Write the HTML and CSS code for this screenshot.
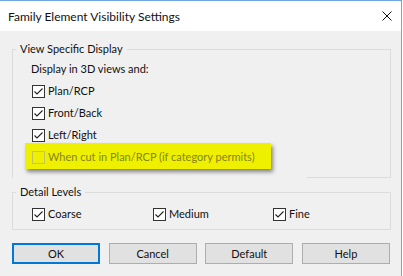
FILE: index.html
```html
<!DOCTYPE html>
<html lang="en">
<head>
  <meta charset="UTF-8" />
  <title>Family Element Visibility Settings</title>
  <link rel="stylesheet" href="styles.css">
</head>
<body>
  <div class="window">
    <div class="titlebar">
      <span class="title">Family Element Visibility Settings</span>
      <svg class="close" width="10" height="10" viewBox="0 0 10 10"><path d="M0.5 0.5 L9.5 9.5 M9.5 0.5 L0.5 9.5" stroke="#111" stroke-width="1" fill="none"/></svg>
    </div>

    <div class="content">
      <fieldset class="group group-view">
        <legend>View Specific Display</legend>
        <div class="row note">Display in 3D views and:</div>
        <label class="row check">
          <svg class="box" viewBox="0 0 13 13"><rect x="0.5" y="0.5" width="12" height="12" fill="#fff" stroke="#333"/><path d="M2.5 6.5 L5 9 L10.5 3.5" fill="none" stroke="#222" stroke-width="1.1"/></svg>
          Plan/RCP
        </label>
        <label class="row check">
          <svg class="box" viewBox="0 0 13 13"><rect x="0.5" y="0.5" width="12" height="12" fill="#fff" stroke="#333"/><path d="M2.5 6.5 L5 9 L10.5 3.5" fill="none" stroke="#222" stroke-width="1.1"/></svg>
          Front/Back
        </label>
        <label class="row check">
          <svg class="box" viewBox="0 0 13 13"><rect x="0.5" y="0.5" width="12" height="12" fill="#fff" stroke="#333"/><path d="M2.5 6.5 L5 9 L10.5 3.5" fill="none" stroke="#222" stroke-width="1.1"/></svg>
          Left/Right
        </label>
        <label class="row check highlight">
          <svg class="box" viewBox="0 0 13 13"><rect x="0.5" y="0.5" width="12" height="12" fill="none" stroke="#c4c45a"/></svg>
          When cut in Plan/RCP (if category permits)
        </label>
        <!-- the pasted highlight hides part of the group's bottom edge -->
        <div class="edge-cover"></div>
      </fieldset>

      <fieldset class="group group-detail">
        <legend>Detail Levels</legend>
        <div class="levels">
          <label class="row check">
            <svg class="box" viewBox="0 0 13 13"><rect x="0.5" y="0.5" width="12" height="12" fill="#fff" stroke="#333"/><path d="M2.5 6.5 L5 9 L10.5 3.5" fill="none" stroke="#222" stroke-width="1.1"/></svg>
            Coarse
          </label>
          <label class="row check">
            <svg class="box" viewBox="0 0 13 13"><rect x="0.5" y="0.5" width="12" height="12" fill="#fff" stroke="#333"/><path d="M2.5 6.5 L5 9 L10.5 3.5" fill="none" stroke="#222" stroke-width="1.1"/></svg>
            Medium
          </label>
          <label class="row check">
            <svg class="box" viewBox="0 0 13 13"><rect x="0.5" y="0.5" width="12" height="12" fill="#fff" stroke="#333"/><path d="M2.5 6.5 L5 9 L10.5 3.5" fill="none" stroke="#222" stroke-width="1.1"/></svg>
            Fine
          </label>
        </div>
      </fieldset>

      <div class="buttons">
        <button class="btn btn-default">OK</button>
        <button class="btn">Cancel</button>
        <button class="btn">Default</button>
        <button class="btn">Help</button>
      </div>
    </div>
  </div>
</body>
</html>
```

FILE: styles.css
```css
/* Reset and base font */
* { margin: 0; padding: 0; box-sizing: border-box; }
body { background: #fff; font-family: Lato, "Open Sans", sans-serif; font-size: 11px; color: #111; }

/* Dialog window */
.window {
  width: 402px;
  height: 276px;
  background: #f0f0f0;
  border-top: 1px solid #6ea6e0;
  border-right: 1px solid #6ea6e0;
}

/* Title bar */
.titlebar {
  height: 30px;
  background: #fff;
  display: flex;
  align-items: center;
  justify-content: space-between;
  padding: 0 9px 0 8px;
}
.title { font-size: 12px; }
.close { display: block; }

/* Dialog content */
.content { padding: 10px 10px 0 12px; }

/* Group boxes */
.group {
  position: relative;
  border: 1px solid #dcdcdc;
  padding: 0 0 10px 3px;
  min-width: 0;
}
.group legend { padding: 0 4px; line-height: 16px; }
.group-detail { margin-top: 6px; padding-top: 2px; padding-bottom: 5px; }

.row { height: 22px; display: flex; align-items: center; white-space: nowrap; }
.note { padding-left: 15px; }
.check { padding-left: 16px; }
.box { width: 13px; height: 13px; margin-right: 3px; flex: none; position: relative; top: 1px; }

/* Yellow highlight on the last option */
.highlight {
  width: 246px;
  height: 26px;
  margin: -2px 0 -2px 9px;
  padding-left: 7px;
  background: #eef000;
  color: #85851c;
  box-shadow: 2px 3px 4px rgba(0, 0, 0, 0.45);
}

.edge-cover {
  position: absolute;
  left: 0;
  bottom: -1px;
  width: 294px;
  height: 1px;
  background: #f0f0f0;
}

/* Detail level columns */
.levels { display: grid; grid-template-columns: 121px 120px auto; }

/* Buttons */
.buttons {
  width: 378px;
  margin-top: 13px;
  display: flex;
  justify-content: space-between;
}
.btn {
  width: 88px;
  height: 21px;
  background: #e1e1e1;
  border: 1px solid #adadad;
  font: inherit;
  color: #111;
}
.btn-default { border: 2px solid #0078d7; }
```
